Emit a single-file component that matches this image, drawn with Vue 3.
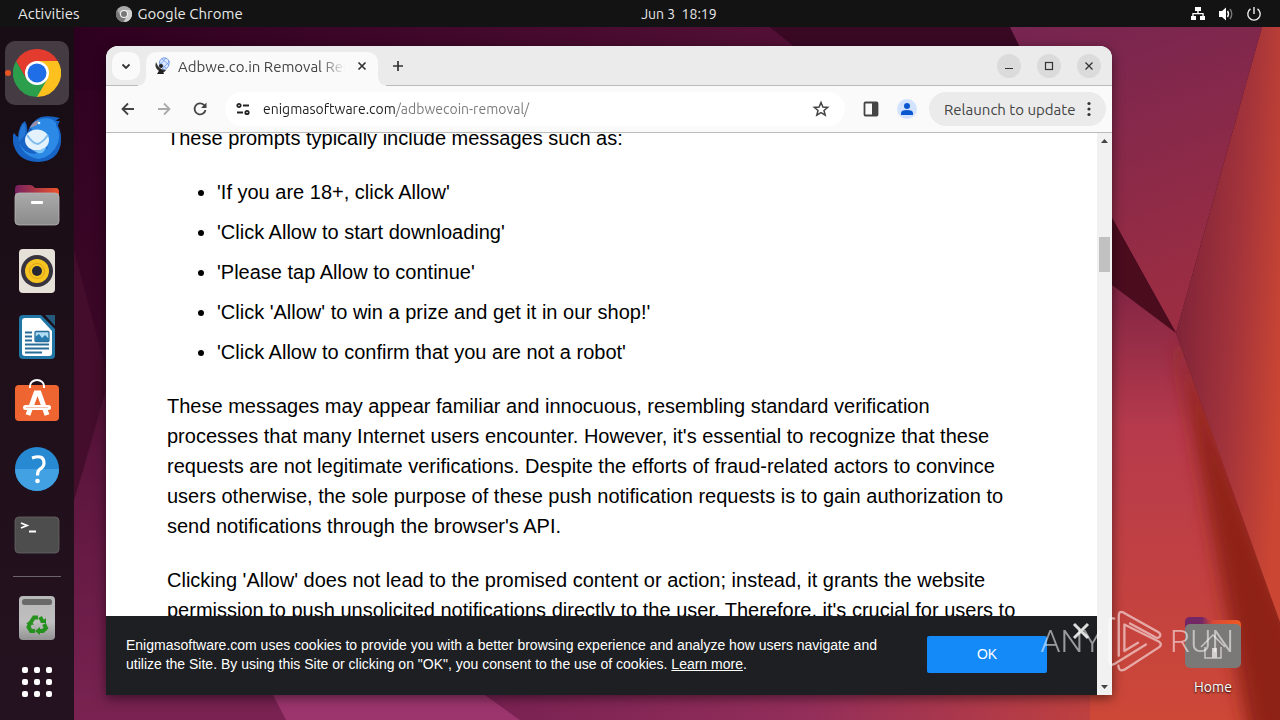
<template>
  <div class="desktop">
    <svg class="wallpaper" viewBox="0 0 1280 720" preserveAspectRatio="none" aria-hidden="true">
      <defs>
        <linearGradient id="base" x1="0" y1="0" x2="0" y2="1">
          <stop offset="0" stop-color="#2e001f" />
          <stop offset="0.5" stop-color="#3d0828" />
          <stop offset="1" stop-color="#7a2352" />
        </linearGradient>
        <linearGradient id="topBand" x1="0" y1="0" x2="1" y2="0">
          <stop offset="0" stop-color="#2e001f" />
          <stop offset="1" stop-color="#561138" />
        </linearGradient>
        <linearGradient id="purple" x1="0" y1="0" x2="0.3" y2="1">
          <stop offset="0" stop-color="#762551" />
          <stop offset="1" stop-color="#9b2d42" />
        </linearGradient>
        <linearGradient id="rightSide" x1="0" y1="0.3" x2="1" y2="0.65">
          <stop offset="0" stop-color="#7c2238" />
          <stop offset="0.55" stop-color="#a2333b" />
          <stop offset="1" stop-color="#cb4633" />
        </linearGradient>
        <linearGradient id="redFace" x1="0" y1="0" x2="0" y2="1">
          <stop offset="0" stop-color="#7d2343" />
          <stop offset="0.35" stop-color="#b63a4c" />
          <stop offset="1" stop-color="#cd4837" />
        </linearGradient>
        <linearGradient id="floor" x1="0" y1="0" x2="1" y2="0">
          <stop offset="0" stop-color="#762052" />
          <stop offset="0.5" stop-color="#932e5a" />
          <stop offset="1" stop-color="#c94539" />
        </linearGradient>
        <filter id="soft" x="-50%" y="-10%" width="200%" height="120%">
          <feGaussianBlur stdDeviation="9" />
        </filter>
      </defs>
      <rect width="1280" height="720" fill="url(#base)" />
      <path d="M74 27H770L850 90H74Z" fill="url(#topBand)" />
      <path d="M770 27H1020L1060 90H850Z" fill="#390923" />
      <path d="M74 250L106 370V400L74 500Z" fill="#430d2b" />
      <path d="M74 720V500L106 390V720Z" fill="#7a2352" opacity="0.3" />
      <path d="M260 670H450L520 720H286Z" fill="#9c356d" />
      <path d="M450 670H1160V720H520Z" fill="url(#floor)" />
      <path d="M1010 27H1262L1176 333L1112 218L1060 130Z" fill="url(#purple)" />
      <path d="M1090 180L1112 218L1176 333L1112 285L1090 270Z" fill="#4b0c1e" />
      <path d="M1090 270L1112 285L1176 333L1280 622V720H1090Z" fill="url(#redFace)" />
      <path d="M1176 333L1300 640V740H1250Z" fill="#8f2118" filter="url(#soft)" />
      <path d="M1262 27H1280V622L1176 333Z" fill="url(#rightSide)" />
    </svg>

    <header class="topbar">
      <nav class="topbar-left">
        <button class="top-btn">Activities</button>
        <button class="top-btn app-btn">
          <svg width="16" height="16" viewBox="0 0 16 16">
            <circle cx="8" cy="8" r="8" fill="#a9a9a9" />
            <path d="M1 4A8 8 0 0 0 7 16L10 11L4 9Z" fill="#777" />
            <path d="M8 4H15A8 8 0 0 1 8 16L12 9Z" fill="#d0d0d0" />
            <circle cx="8" cy="8" r="4" fill="#f4f4f4" />
            <circle cx="8" cy="8" r="3" fill="#777" />
          </svg>
          Google Chrome
        </button>
      </nav>
      <button class="top-btn clock">Jun 3&nbsp; 18:19</button>
      <div class="tray">
        <svg width="16" height="16" viewBox="0 0 16 16" fill="#fff">
          <path d="M5 1H11V5H8.700V7H13.700V10H15V14H10V10H12.400V8.300H3.600V10H6V14H1V10H2.300V7H7.300V5H5Z" />
        </svg>
        <svg width="16" height="16" viewBox="0 0 16 16">
          <path d="M1 5H4L8 1.500V14.500L4 11H1Z" fill="#fff" />
          <path d="M9.500 5Q11.500 8 9.500 11" fill="none" stroke="#fff" stroke-width="1.400" />
          <path d="M12 3Q15.500 8 12 13" fill="none" stroke="#777" stroke-width="1.400" />
        </svg>
        <svg width="16" height="16" viewBox="0 0 16 16" fill="none" stroke="#eee" stroke-width="1.400">
          <path d="M8 1V8M4.500 2.800A6.200 6.200 0 1 0 11.500 2.800" />
        </svg>
      </div>
    </header>

    <div class="body">
      <aside class="dock">
        <button class="dock-item active" aria-label="Google Chrome">
          <svg width="48" height="48" viewBox="0 0 48 48">
            <path d="M24 24V12H44.800A24 24 0 0 1 24 48Z" fill="#fcc11f" />
            <path d="M24 24L34.400 30L24 48A24 24 0 0 1 3.200 12L13.600 30Z" fill="#2b9f4b" />
            <path d="M3.200 12A24 24 0 0 1 44.800 12H24L13.600 30Z" fill="#e33b2e" />
            <circle cx="24" cy="24" r="12" fill="#fff" />
            <circle cx="24" cy="24" r="9.500" fill="#1f6ee8" />
          </svg>
        </button>
        <button class="dock-item" aria-label="Thunderbird">
          <svg width="48" height="48" viewBox="0 0 48 48">
            <path d="M1 18Q3 21 5 22Q6 10 12 6Q15 11 14 18Q19 5 28 2Q36 0 47 3Q44 4 43 6L47 6Q45 8 45 11Q49 18 48 27Q46 46 25 47Q3 46 0 27Q-1 21 1 18Z" fill="#1763c5" />
            <path d="M17 12Q25 1 38 4Q44 7 43 10Q48 18 45 28Q39 42 26 44Q11 42 6 28Q11 38 21 39L35 33Z" fill="#2c8ae6" />
            <path d="M6 27Q5 15 11 8Q13 12 12 20Z" fill="#2778d6" />
            <ellipse cx="24" cy="25" rx="12" ry="10.500" fill="#e3f2fd" />
            <path d="M14 20Q20 29 25 29Q30 27 35 20" fill="none" stroke="#80bdef" stroke-width="2" />
            <path d="M17 13Q19 7 26 5L24 10Z" fill="#9a8fa6" />
            <circle cx="26" cy="8" r="1.300" fill="#d8f5ff" />
            <path d="M19 35Q27 37 34 31Q30 40 25 38Z" fill="#7cc5fa" />
          </svg>
        </button>
        <button class="dock-item" aria-label="Files">
          <svg width="48" height="48" viewBox="0 0 48 48">
            <defs>
              <linearGradient id="tabFill"><stop stop-color="#752060" /><stop offset="1" stop-color="#ed542a" /></linearGradient>
              <linearGradient id="folderFill" x2="0" y2="1"><stop stop-color="#aaa" /><stop offset="1" stop-color="#8b8b8b" /></linearGradient>
            </defs>
            <path d="M2 8Q2 4 6 4H17Q20 4 22 7H43Q46 7 46 11V20H2Z" fill="url(#tabFill)" />
            <rect x="2" y="12" width="44" height="32" rx="4" fill="url(#folderFill)" stroke="#b5b5b5" stroke-width="0.800" />
            <rect x="18" y="20" width="12" height="3" rx="1" fill="#fff" />
          </svg>
        </button>
        <button class="dock-item" aria-label="Rhythmbox">
          <svg width="48" height="48" viewBox="0 0 48 48">
            <rect x="6" y="2" width="36" height="44" rx="4" fill="#e5e0d8" />
            <circle cx="24" cy="24" r="16" fill="#37343f" />
            <circle cx="24" cy="24" r="12" fill="#f5c421" />
            <circle cx="24" cy="24" r="7.500" fill="none" stroke="#dda417" />
            <circle cx="24" cy="24" r="5" fill="#252733" />
          </svg>
        </button>
        <button class="dock-item" aria-label="LibreOffice Writer">
          <svg width="48" height="48" viewBox="0 0 48 48">
            <path d="M32 2H42V13Z" fill="#245b7c" />
            <path d="M10 2H28L42 16V42Q42 46 38 46H10Q6 46 6 42V6Q6 2 10 2Z" fill="#2077a6" />
            <path d="M12 5H27L39 18V40Q39 43 36 43H12Q9 43 9 40V8Q9 5 12 5Z" fill="#fff" />
            <path d="M12 19.500H19M12 23.500H19M12 27.500H19M12 31.500H36M12 35.500H36M12 39.500H29" stroke="#286d98" stroke-width="2" />
            <rect x="22" y="18.500" width="14" height="10" rx="1" fill="#afddf4" stroke="#286d98" stroke-width="1.300" />
            <path d="M22 28V24L26 21L29 25L32 22L36 26V28Z" fill="#287bac" />
          </svg>
        </button>
        <button class="dock-item" aria-label="Ubuntu Software">
          <svg width="48" height="48" viewBox="0 0 48 48">
            <rect x="2" y="6" width="44" height="36" rx="4" fill="#ee6532" />
            <path d="M17 9V7A7 6 0 0 1 31 7V9" fill="none" stroke="#fff" stroke-width="2" />
            <path d="M15 36L23 14H26L34 36" fill="none" stroke="#fff" stroke-width="5" />
            <rect x="10" y="26" width="28" height="5" rx="2.500" fill="#fff" />
            <path d="M13 28.500H35" stroke="#f2b39d" stroke-width="0.800" />
          </svg>
        </button>
        <button class="dock-item" aria-label="Help">
          <svg width="48" height="48" viewBox="0 0 48 48">
            <circle cx="24" cy="24" r="22" fill="#2789d2" />
            <path d="M2 24A22 22 0 0 0 46 24Z" fill="#42a1e3" />
            <path d="M19 13Q31 9 31 18Q31 22 26.500 24.500Q24.500 26 24.500 30.500" fill="none" stroke="#fff" stroke-width="3.200" />
            <circle cx="24.500" cy="36" r="2.300" fill="#fff" />
          </svg>
        </button>
        <button class="dock-item" aria-label="Terminal">
          <svg width="48" height="48" viewBox="0 0 48 48">
            <rect x="2" y="6" width="44" height="36" rx="4" fill="#4d4d4d" stroke="#666" stroke-width="0.800" />
            <path d="M8 12L14 14.500L8 17M16 20.500H23" fill="none" stroke="#fff" stroke-width="1.800" />
          </svg>
        </button>
        <div class="dock-line"></div>
        <button class="dock-item" aria-label="Trash">
          <svg width="48" height="48" viewBox="0 0 48 48">
            <defs>
              <linearGradient id="binFill" x2="0" y2="1"><stop stop-color="#b8b8b8" /><stop offset="0.600" stop-color="#bfbfbf" /><stop offset="1" stop-color="#929292" /></linearGradient>
            </defs>
            <rect x="6" y="2" width="36" height="44" rx="4" fill="url(#binFill)" />
            <rect x="9" y="5" width="30" height="6" rx="2.500" fill="#696969" />
            <g fill="none" stroke="#27911f" stroke-width="4">
              <path d="M18 28L21 23.500H25M27 23L30 28" />
              <path d="M31 30L33 34L30 37H26" />
              <path d="M22 37H18L15.500 33L17 29.500" />
            </g>
            <path d="M27 29H33V24ZM27 33V41L22 37ZM13 29.500L18 26L21 31Z" fill="#27911f" />
          </svg>
        </button>
        <button class="apps-btn" aria-label="Show applications">
          <span v-for="n in 9" :key="n"></span>
        </button>
      </aside>

      <div class="workspace">
        <main class="window">
          <div class="tabstrip">
            <button class="tab-search" aria-label="Search tabs">
              <svg width="12" height="12" viewBox="0 0 12 12"><path d="M2.500 4.500L6 8L9.500 4.500" fill="none" stroke="#333" stroke-width="1.800" /></svg>
            </button>
            <div class="tab">
              <svg class="favicon" width="18" height="18" viewBox="0 0 18 18">
                <path d="M6 9Q4 3 9 1Q14 0 15 5Q16 10 10 13Z" fill="#dce8ff" stroke="#7198e4" />
                <path d="M5 5L13 12M8 2L15 8M5 9L12 1M8 12L16 4" stroke="#7198e4" stroke-width="0.800" />
                <path d="M2 5Q0 11 5 14Q10 17 12 13Q7 13 4 9Z" fill="#333" />
                <circle cx="7" cy="9" r="2" fill="#222" />
                <path d="M3 17L6 12L9 14L10 17Z" fill="#222" />
              </svg>
              <span class="tab-title">Adbwe.co.in Removal Report</span>
              <button class="icon-btn small" aria-label="Close tab">
                <svg width="10" height="10" viewBox="0 0 10 10"><path d="M1.500 1.500L8.500 8.500M8.500 1.500L1.500 8.500" stroke="#333" stroke-width="1.700" /></svg>
              </button>
            </div>
            <button class="icon-btn new-tab" aria-label="New tab">
              <svg width="12" height="12" viewBox="0 0 12 12"><path d="M6 1V11M1 6H11" stroke="#333" stroke-width="1.700" /></svg>
            </button>
            <div class="win-controls">
              <button aria-label="Minimize"><svg width="10" height="10" viewBox="0 0 10 10"><path d="M1 7.500H9" stroke="#333" /></svg></button>
              <button aria-label="Maximize"><svg width="10" height="10" viewBox="0 0 10 10"><rect x="1.500" y="1.500" width="7" height="7" fill="none" stroke="#333" stroke-width="1.200" /></svg></button>
              <button aria-label="Close"><svg width="10" height="10" viewBox="0 0 10 10"><path d="M1.500 1.500L8.500 8.500M8.500 1.500L1.500 8.500" stroke="#333" stroke-width="1.300" /></svg></button>
            </div>
          </div>

          <div class="toolbar">
            <div class="nav-btns">
              <button class="icon-btn" aria-label="Back">
                <svg width="16" height="16" viewBox="0 0 16 16"><path d="M14 8H3M8 2.500L2.500 8L8 13.500" fill="none" stroke="#444" stroke-width="1.800" /></svg>
              </button>
              <button class="icon-btn" aria-label="Forward">
                <svg width="16" height="16" viewBox="0 0 16 16"><path d="M2 8H13M8 2.500L13.500 8L8 13.500" fill="none" stroke="#aaa" stroke-width="1.800" /></svg>
              </button>
              <button class="icon-btn" aria-label="Reload">
                <svg width="16" height="16" viewBox="0 0 16 16"><path d="M13.500 9A5.500 5.500 0 1 1 12 4L13.500 6" fill="none" stroke="#444" stroke-width="1.800" /><path d="M14.500 1.500V7H9Z" fill="#444" /></svg>
              </button>
            </div>
            <div class="omnibox">
              <button class="icon-btn site-info" aria-label="Site information">
                <svg width="14" height="14" viewBox="0 0 14 14" fill="none" stroke="#222" stroke-width="1.800">
                  <circle cx="3" cy="3.500" r="1.700" /><path d="M7 3.500H13" />
                  <circle cx="11" cy="10.500" r="1.700" /><path d="M1 10.500H7" />
                </svg>
              </button>
              <input v-model="url" class="url" type="text" aria-label="Address" spellcheck="false">
              <button class="icon-btn" aria-label="Bookmark">
                <svg width="18" height="18" viewBox="0 0 18 18"><path d="M9 2.500L10.900 7L15.700 7.400L12 10.500L13.200 15.200L9 12.700L4.800 15.200L6 10.500L2.300 7.400L7.100 7Z" fill="none" stroke="#444" stroke-width="1.500" /></svg>
              </button>
            </div>
            <button class="icon-btn" aria-label="Side panel">
              <svg width="16" height="16" viewBox="0 0 16 16"><rect x="1.500" y="1.500" width="13" height="13" rx="1" fill="none" stroke="#444" stroke-width="1.800" /><path d="M9 1H15V15H9Z" fill="#444" /></svg>
            </button>
            <button class="icon-btn" aria-label="Profile">
              <svg width="20" height="20" viewBox="0 0 20 20"><circle cx="10" cy="10" r="10" fill="#d3e3fd" /><circle cx="10" cy="7" r="3" fill="#0b57d0" /><path d="M4 16V14Q4 11 10 11Q16 11 16 14V16Z" fill="#0b57d0" /></svg>
            </button>
            <button class="relaunch">
              Relaunch to update
              <svg width="4" height="16" viewBox="0 0 4 16" fill="#333"><circle cx="2" cy="2.500" r="1.600" /><circle cx="2" cy="8" r="1.600" /><circle cx="2" cy="13.500" r="1.600" /></svg>
            </button>
          </div>

          <div class="view">
            <div class="page">
              <article class="article">
                <p>These prompts typically include messages such as:</p>
                <ul>
                  <li v-for="prompt in prompts" :key="prompt">{{ prompt }}</li>
                </ul>
                <p v-for="text in paragraphs" :key="text">{{ text }}</p>
              </article>
              <section v-if="showCookies" class="cookies">
                <p>
                  Enigmasoftware.com uses cookies to provide you with a better browsing experience and analyze how users navigate and
                  utilize the Site. By using this Site or clicking on "OK", you consent to the use of cookies.
                  <a href="#">Learn more</a>.
                </p>
                <button class="ok-btn" @click="showCookies = false">OK</button>
                <button class="cookies-close" aria-label="Close" @click="showCookies = false">
                  <svg width="18" height="18" viewBox="0 0 18 18"><path d="M2 2L16 16M16 2L2 16" stroke="#ddd" stroke-width="3" /></svg>
                </button>
              </section>
            </div>
            <div class="scrollbar">
              <svg width="15" height="16" viewBox="0 0 15 16"><path d="M4 10L7.500 6L11 10Z" fill="#444" /></svg>
              <div class="track"><div class="thumb"></div></div>
              <svg width="15" height="16" viewBox="0 0 15 16"><path d="M4 6L7.500 10L11 6Z" fill="#444" /></svg>
            </div>
          </div>
        </main>
      </div>
    </div>

    <a class="home" href="#">
      <svg width="56" height="52" viewBox="0 0 56 52">
        <defs>
          <linearGradient id="homeTab"><stop offset="0.300" stop-color="#742765" /><stop offset="0.500" stop-color="#d84a37" /><stop offset="1" stop-color="#f05a22" /></linearGradient>
        </defs>
        <path d="M0 5Q0 0 5 0H18Q21 0 23 3H51Q56 3 56 8V18H0Z" fill="url(#homeTab)" />
        <rect y="7" width="56" height="44" rx="5" fill="#7b7977" />
        <path d="M16 30L28 18L40 30M20 30V41H36V30" fill="none" stroke="#c9c6c4" stroke-width="1.500" />
        <path d="M27 31H32V41H27Z" fill="#d5d1cf" />
      </svg>
      <span>Home</span>
    </a>

    <div class="watermark">
      <span>ANY</span>
      <svg width="56" height="63" viewBox="330 25 168 190" fill="none" stroke="#fff" stroke-width="7" stroke-linejoin="round" stroke-linecap="round">
        <path d="M348 54Q334 48 334 64V182Q336 198 350 190L444 132" />
        <path d="M362 166V46Q362 29 377 36L482 95Q491 102 485 109Q479 115 470 109L396 69" />
        <path d="M361 196Q362 215 379 208L484 140Q494 132 484 124L379 72V152L420 127" />
      </svg>
      <span>RUN</span>
    </div>
  </div>
</template>

<script setup>
import { ref } from 'vue'

const url = ref('enigmasoftware.com/adbwecoin-removal/')
const showCookies = ref(true)

const prompts = [
  "'If you are 18+, click Allow'",
  "'Click Allow to start downloading'",
  "'Please tap Allow to continue'",
  "'Click 'Allow' to win a prize and get it in our shop!'",
  "'Click Allow to confirm that you are not a robot'"
]

const paragraphs = [
  "These messages may appear familiar and innocuous, resembling standard verification processes that many Internet users encounter. However, it's essential to recognize that these requests are not legitimate verifications. Despite the efforts of fraud-related actors to convince users otherwise, the sole purpose of these push notification requests is to gain authorization to send notifications through the browser's API.",
  "Clicking 'Allow' does not lead to the promised content or action; instead, it grants the website permission to push unsolicited notifications directly to the user. Therefore, it's crucial for users to"
]
</script>

<style>
body {
  margin: 0;
}
</style>

<style scoped>
.desktop {
  position: relative;
  display: flex;
  flex-direction: column;
  height: 100vh;
  overflow: hidden;
  font-family: Ubuntu, "Noto Sans", sans-serif;
  font-size: 15px;
}

.desktop * {
  box-sizing: border-box;
}

button {
  margin: 0;
  padding: 0;
  border: none;
  background: none;
  font: inherit;
  color: inherit;
  cursor: pointer;
}

svg {
  display: block;
  flex: none;
}

.wallpaper {
  position: absolute;
  inset: 0;
  width: 100%;
  height: 100%;
}

.topbar {
  position: relative;
  display: grid;
  grid-template-columns: 8fr auto 7fr;
  align-items: center;
  height: 27px;
  flex: none;
  padding: 0 18px;
  background: #131313;
  color: #e8e8e8;
}

.topbar-left {
  display: flex;
  gap: 36px;
}

.top-btn {
  display: flex;
  align-items: center;
  gap: 6px;
  white-space: nowrap;
}

.clock {
  font-size: 14px;
}

.tray {
  display: flex;
  justify-content: flex-end;
  gap: 12px;
}

.body {
  position: relative;
  display: flex;
  flex: 1;
  min-height: 0;
}

.dock {
  display: flex;
  flex-direction: column;
  align-items: center;
  gap: 2px;
  width: 74px;
  flex: none;
  padding: 14px 0 8px;
  background: linear-gradient(#180d14, #251220);
}

.dock-item {
  position: relative;
  display: flex;
  align-items: center;
  justify-content: center;
  width: 64px;
  height: 64px;
  flex: none;
  border-radius: 10px;
}

.dock-item.active {
  background: #453c43;
}

.dock-item.active::before {
  content: '';
  position: absolute;
  left: 0;
  width: 6px;
  height: 6px;
  border-radius: 50%;
  background: #e95420;
}

.dock-line {
  width: 48px;
  height: 1px;
  flex: none;
  margin: 7px 0;
  background: #6d636a;
}

.apps-btn {
  display: grid;
  grid-template-columns: repeat(3, 6px);
  gap: 6px;
  align-content: center;
  justify-content: center;
  width: 64px;
  height: 60px;
  margin-top: auto;
}

.apps-btn span {
  height: 6px;
  border-radius: 2px;
  background: #fff;
}

.workspace {
  display: flex;
  flex: 1;
  min-width: 0;
  padding: 19px 168px 25px 32px;
}

.window {
  display: flex;
  flex-direction: column;
  flex: 1;
  min-width: 0;
  border-radius: 12px 12px 0 0;
  overflow: hidden;
  background: #fff;
  box-shadow: 0 3px 12px rgba(0, 0, 0, 0.5);
}

.tabstrip {
  display: flex;
  align-items: center;
  height: 40px;
  flex: none;
  padding: 0 11px 0 6px;
  background: #ebebeb;
  box-shadow: inset 0 -1px #bbb;
  color: #444;
}

.tab-search {
  display: flex;
  align-items: center;
  justify-content: center;
  width: 28px;
  height: 28px;
  margin-right: 6px;
  border-radius: 10px;
  background: #fafafa;
}

.tab {
  position: relative;
  display: flex;
  align-items: center;
  align-self: flex-end;
  width: 232px;
  height: 34px;
  padding: 0 6px 6px 8px;
  border-radius: 10px 10px 0 0;
  background: #fafafa;
}

.tab::before,
.tab::after {
  content: '';
  position: absolute;
  bottom: 0;
  width: 8px;
  height: 8px;
}

.tab::before {
  left: -8px;
  background: radial-gradient(circle at 0 0, #ebebeb 7px, #fafafa 8px);
}

.tab::after {
  right: -8px;
  background: radial-gradient(circle at 100% 0, #ebebeb 7px, #fafafa 8px);
}

.tab-title {
  flex: 1;
  min-width: 0;
  margin: 0 7px 0 6px;
  overflow: hidden;
  white-space: nowrap;
  mask-image: linear-gradient(90deg, #000 85%, transparent);
}

.icon-btn {
  display: flex;
  align-items: center;
  justify-content: center;
  width: 36px;
  height: 28px;
  flex: none;
}

.icon-btn.small {
  width: 20px;
  height: 20px;
}

.icon-btn.new-tab {
  width: 40px;
}

.win-controls {
  display: flex;
  gap: 16px;
  margin-left: auto;
}

.win-controls button {
  display: flex;
  align-items: center;
  justify-content: center;
  width: 24px;
  height: 24px;
  border-radius: 50%;
  background: #dbdbdb;
}

.toolbar {
  display: flex;
  align-items: center;
  height: 47px;
  flex: none;
  padding: 0 6px 0 4px;
  border-bottom: 1px solid #bbb;
  background: #fafafa;
  color: #444;
}

.nav-btns {
  display: flex;
  margin-right: 7px;
}

.omnibox {
  display: flex;
  align-items: center;
  flex: 1;
  min-width: 0;
  height: 34px;
  margin-right: 8px;
  padding: 0 6px 0 4px;
  border-radius: 17px;
  background: #fff;
}

.site-info {
  width: 28px;
}

.url {
  flex: 1;
  min-width: 0;
  height: 28px;
  padding: 0 6px;
  border: none;
  outline: none;
  background: linear-gradient(90deg, #1f1f1f 139px, #777 139px);
  background-clip: text;
  color: transparent;
  font: inherit;
  font-size: 14px;
}

.relaunch {
  display: flex;
  align-items: center;
  justify-content: space-between;
  gap: 8px;
  min-width: 177px;
  height: 34px;
  margin-left: 4px;
  padding: 0 15px;
  border-radius: 17px;
  background: #ebebeb;
  white-space: nowrap;
}

.view {
  display: flex;
  flex: 1;
  min-height: 0;
  font-family: "Liberation Sans", Arial, sans-serif;
}

.page {
  display: flex;
  flex-direction: column;
  flex: 1;
  min-width: 0;
}

.article {
  flex: 1;
  min-height: 0;
  padding: 0 76px 0 61px;
  overflow: hidden;
  color: #000;
  font-size: 20px;
  line-height: 30px;
}

.article p {
  margin: 0 0 24px;
}

.article p:first-child {
  margin-top: -10px;
}

.article ul {
  margin: 0 0 24px;
  padding-left: 50px;
}

.article li + li {
  margin-top: 10px;
}

.cookies {
  position: relative;
  display: flex;
  align-items: flex-start;
  gap: 40px;
  flex: none;
  padding: 20px 50px 21px 20px;
  background: #1d1f23;
  color: #fff;
  font-size: 14px;
  line-height: 19px;
}

.cookies p {
  flex: 1;
  margin: 0;
}

.cookies a {
  color: inherit;
}

.ok-btn {
  width: 120px;
  height: 37px;
  flex: none;
  border-radius: 2px;
  background: #138af8;
}

.cookies-close {
  position: absolute;
  top: 6px;
  right: 7px;
}

.scrollbar {
  display: flex;
  flex-direction: column;
  width: 15px;
  flex: none;
  background: #f1f1f1;
}

.track {
  flex: 1;
  padding: 88px 2px 0;
}

.thumb {
  height: 35px;
  background: #c1c1c1;
}

.home {
  position: absolute;
  right: 39px;
  bottom: 23px;
  display: flex;
  flex-direction: column;
  align-items: center;
  gap: 8px;
  color: #fff;
  font-size: 14px;
  line-height: 20px;
  text-decoration: none;
  text-shadow: 0 1px 2px #000;
}

.watermark {
  position: absolute;
  right: 46px;
  bottom: 48px;
  display: flex;
  align-items: center;
  gap: 6px;
  color: #fff;
  font-family: Roboto, sans-serif;
  font-size: 32px;
  font-weight: 300;
  opacity: 0.55;
  pointer-events: none;
}
</style>
